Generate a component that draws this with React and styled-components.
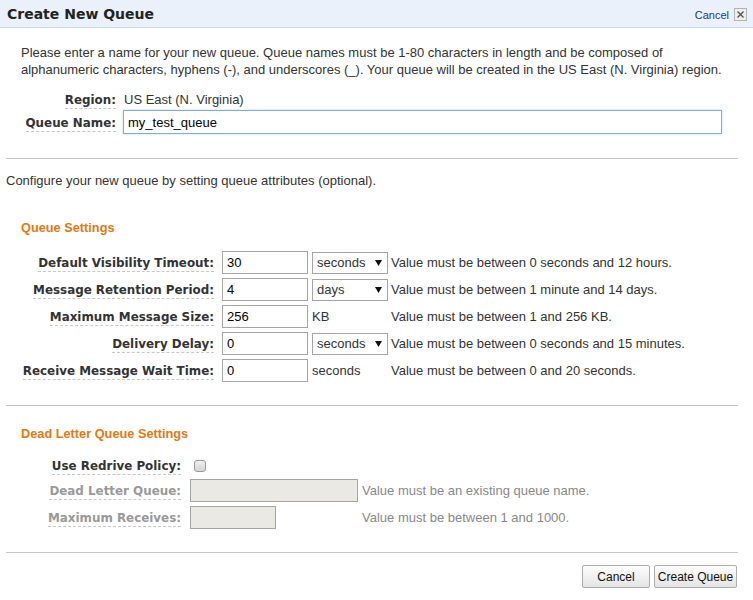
import React from 'react'
import styled, { createGlobalStyle } from 'styled-components'

const GlobalStyle = createGlobalStyle`
  html, body {
    margin: 0;
    padding: 0;
    background: #fff;
  }
  body {
    font-family: "Liberation Sans", Arial, sans-serif;
    font-size: 13px;
    color: #333;
  }
`

const Dialog = styled.div`
  width: 753px;
  height: 600px;
  overflow: hidden;
  background: #fff;
`

const TitleBar = styled.div`
  height: 27px;
  display: flex;
  align-items: center;
  justify-content: space-between;
  padding: 0 6px 0 7px;
  background: #eaf1fb;
  border-bottom: 1px solid #c9d9ee;
`

const Title = styled.h1`
  margin: 0;
  font-family: "DejaVu Sans", Verdana, sans-serif;
  font-weight: bold;
  font-size: 14px;
  color: #222;
`

const CloseArea = styled.div`
  display: flex;
  align-items: center;
  gap: 5px;
  margin-top: 2px;
`

const CancelLink = styled.a`
  font-size: 11px;
  color: #1e3a7a;
  text-decoration: none;
`

const CloseBox = styled.span`
  width: 11px;
  height: 11px;
  border: 1px solid #b4b4b4;
  background: #efefef;
  display: flex;
  align-items: center;
  justify-content: center;
`

const Body = styled.div`
  padding: 0 15px 0 6px;
`

const Intro = styled.p`
  margin: 16px 0 12px 15px;
  line-height: 17px;
`

const Divider = styled.hr`
  margin: 0;
  border: none;
  border-top: 1px solid #c4c4c4;
`

const Form = styled.div`
  display: flex;
  flex-direction: column;
  gap: ${(p) => p.gap || 4}px;
  padding-left: 15px;
`

const Row = styled.div`
  display: flex;
  align-items: center;
  min-height: ${(p) => p.h || 23}px;
`

const LabelCell = styled.div`
  width: ${(p) => p.w}px;
  flex: none;
  text-align: right;
  margin-right: ${(p) => p.gap || 8}px;
`

const Label = styled.span`
  font-family: "DejaVu Sans", Verdana, sans-serif;
  font-weight: bold;
  font-size: 11.9px;
  color: ${(p) => (p.disabled ? '#999' : '#333')};
  border-bottom: 1px dashed #c8c8c8;
  padding-bottom: 1px;
`

const Value = styled.span`
  color: #333;
`

const TextBox = styled.input`
  box-sizing: border-box;
  width: ${(p) => p.w}px;
  height: ${(p) => p.h || 23}px;
  margin: 0;
  padding: 0 4px;
  font-family: "Liberation Sans", Arial, sans-serif;
  font-size: 13px;
  color: #000;
  background: ${(p) => (p.disabled ? '#ebe9e3' : '#fff')};
  border: 1px solid ${(p) => (p.focused ? '#86a9d8' : '#a5a5a5')};
  box-shadow: ${(p) => (p.focused ? '0 0 2px #bcd3ef' : 'none')};
  outline: none;
  flex: none;
`

const Unit = styled.div`
  width: 76px;
  margin-left: 4px;
  flex: none;
  display: flex;
  align-items: center;
`

const Select = styled.div`
  box-sizing: border-box;
  width: 76px;
  height: 22px;
  border: 1px solid #a5a5a5;
  display: flex;
  align-items: center;
  justify-content: space-between;
  padding: 0 5px 0 4px;
  color: #333;
  background: #fff;
`

const Hint = styled.span`
  margin-left: ${(p) => p.ml || 3}px;
  color: ${(p) => (p.disabled ? '#888' : '#333')};
`

const Plain = styled.p`
  margin: 13px 0 0 0;
  line-height: 17px;
`

const SectionTitle = styled.h2`
  margin: ${(p) => p.mt}px 0 ${(p) => p.mb || 15}px 15px;
  font-family: "Liberation Sans", Arial, sans-serif;
  font-weight: bold;
  font-size: 12.75px;
  line-height: 17px;
  color: #e47911;
`

const Checkbox = styled.span`
  box-sizing: border-box;
  width: 12px;
  height: 12px;
  margin-left: 4px;
  border: 1px solid #9a9a9a;
  border-radius: 3px;
  background: linear-gradient(#f0f0f0, #d4d4d4);
`

const Footer = styled.div`
  display: flex;
  justify-content: flex-end;
  gap: 4px;
  padding: 12px 1px 0 0;
`

const Button = styled.button`
  box-sizing: border-box;
  width: ${(p) => p.w}px;
  height: 23px;
  padding: 0;
  font-family: "Liberation Sans", Arial, sans-serif;
  font-size: 12px;
  color: #111;
  background: linear-gradient(#fdfdfd, #e4e4e4);
  border: 1px solid #adadad;
  border-radius: 2px;
`

const Arrow = () => (
  <svg width="7" height="6" viewBox="0 0 7 6">
    <polygon points="0,0 7,0 3.5,6" fill="#111" />
  </svg>
)

const settings = [
  { label: 'Default Visibility Timeout:', value: '30', unit: 'seconds', select: true, hint: 'Value must be between 0 seconds and 12 hours.' },
  { label: 'Message Retention Period:', value: '4', unit: 'days', select: true, hint: 'Value must be between 1 minute and 14 days.' },
  { label: 'Maximum Message Size:', value: '256', unit: 'KB', hint: 'Value must be between 1 and 256 KB.' },
  { label: 'Delivery Delay:', value: '0', unit: 'seconds', select: true, hint: 'Value must be between 0 seconds and 15 minutes.' },
  { label: 'Receive Message Wait Time:', value: '0', unit: 'seconds', hint: 'Value must be between 0 and 20 seconds.' },
]

export default function App() {
  return (
    <Dialog>
      <GlobalStyle />
      <TitleBar>
        <Title>Create New Queue</Title>
        <CloseArea>
          <CancelLink href="#">Cancel</CancelLink>
          <CloseBox>
            <svg width="7" height="7" viewBox="0 0 7 7">
              <path d="M0.5 0.5 L6.5 6.5 M6.5 0.5 L0.5 6.5" stroke="#555" strokeWidth="1.4" />
            </svg>
          </CloseBox>
        </CloseArea>
      </TitleBar>

      <Body>
        <Intro>
          Please enter a name for your new queue. Queue names must be 1-80 characters in length and be composed of
          alphanumeric characters, hyphens (-), and underscores (_). Your queue will be created in the US East (N. Virginia) region.
        </Intro>
        <Form gap={2}>
          <Row h={18}>
            <LabelCell w={95} gap={8}><Label>Region:</Label></LabelCell>
            <Value>US East (N. Virginia)</Value>
          </Row>
          <Row h={24}>
            <LabelCell w={95} gap={7}><Label>Queue Name:</Label></LabelCell>
            <TextBox w={599} h={24} focused defaultValue="my_test_queue" />
          </Row>
        </Form>

        <Divider style={{ marginTop: 24 }} />
        <Plain>Configure your new queue by setting queue attributes (optional).</Plain>

        <SectionTitle mt={30}>Queue Settings</SectionTitle>
        <Form>
          {settings.map((s) => (
            <Row key={s.label}>
              <LabelCell w={193} gap={8}><Label>{s.label}</Label></LabelCell>
              <TextBox w={86} defaultValue={s.value} />
              <Unit>
                {s.select ? <Select>{s.unit}<Arrow /></Select> : <span>{s.unit}</span>}
              </Unit>
              <Hint>{s.hint}</Hint>
            </Row>
          ))}
        </Form>

        <Divider style={{ marginTop: 23 }} />
        <SectionTitle mt={19} mb={14}>Dead Letter Queue Settings</SectionTitle>
        <Form>
          <Row h={19}>
            <LabelCell w={160} gap={9}><Label>Use Redrive Policy:</Label></LabelCell>
            <Checkbox />
          </Row>
          <Row>
            <LabelCell w={160} gap={9}><Label disabled>Dead Letter Queue:</Label></LabelCell>
            <TextBox w={168} disabled />
            <Hint ml={4} disabled>Value must be an existing queue name.</Hint>
          </Row>
          <Row>
            <LabelCell w={160} gap={9}><Label disabled>Maximum Receives:</Label></LabelCell>
            <TextBox w={86} disabled />
            <Hint ml={86} disabled>Value must be between 1 and 1000.</Hint>
          </Row>
        </Form>

        <Divider style={{ marginTop: 23 }} />
        <Footer>
          <Button w={68}>Cancel</Button>
          <Button w={83}>Create Queue</Button>
        </Footer>
      </Body>
    </Dialog>
  )
}
